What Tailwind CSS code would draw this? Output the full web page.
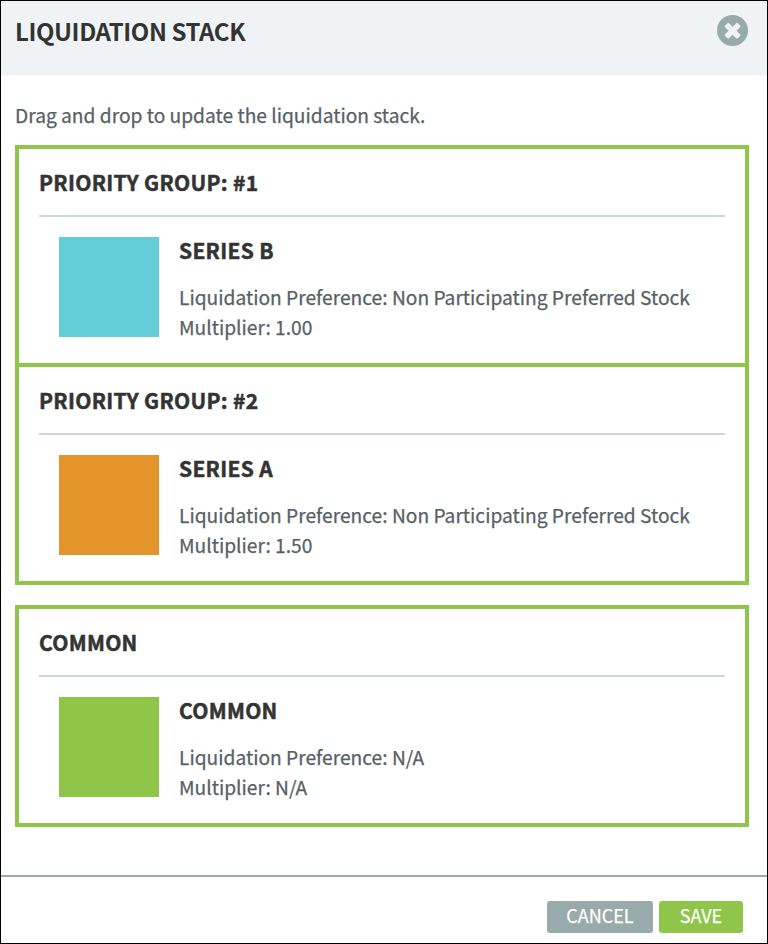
<!DOCTYPE html>
<html lang="en">

<head>
    <meta charset="UTF-8">
    <meta name="viewport" content="width=device-width, initial-scale=1.0">
    <title>Liquidation Stack</title>
    <script src="https://cdn.jsdelivr.net/npm/@tailwindcss/browser@4"></script>
</head>

<body class="bg-white font-['Noto_Sans_CJK_SC','Open_Sans',sans-serif] text-[19.2px] leading-[30px] text-[#566166] [-webkit-text-stroke:0.25px]">
    <div class="flex flex-col w-[768px] h-[944px] border border-black">
        <!-- Header -->
        <header class="flex justify-between h-[74px] shrink-0 bg-[#eff3f6] pl-[14px] pr-[19px] pt-[14px]">
            <h1 class="text-[24px] leading-[32px] font-bold tracking-[-0.4px] text-[#333333] [-webkit-text-stroke:0px]">LIQUIDATION STACK</h1>
            <button class="size-[31px]" aria-label="Close">
                <svg viewBox="0 0 31 31" class="size-[31px]">
                    <circle cx="15.5" cy="15.5" r="15.5" fill="#99aaaa" />
                    <g fill="#eff3f6" transform="rotate(45 15.6 15.7)">
                        <rect x="6.6" y="12.9" width="18" height="5.6" rx="1.2" />
                        <rect x="12.8" y="6.7" width="5.6" height="18" rx="1.2" />
                    </g>
                </svg>
            </button>
        </header>

        <!-- Stack -->
        <main class="pl-[14px] pr-[18px] pt-[25px]">
            <p class="mb-[15px]">Drag and drop to update the liquidation stack.</p>

            <section class="h-[222px] border-4 border-[#8fc64a] px-5">
                <h2 class="h-[68px] border-b-2 border-[#cdd9d9] pt-[18px] text-[21px] font-bold tracking-[0.3px] text-[#333333] [-webkit-text-stroke:0.5px]">PRIORITY GROUP: #1</h2>
                <div class="flex gap-[20px] pl-5 pt-5">
                    <div class="size-[100px] shrink-0 bg-[#64ccd6]"></div>
                    <div>
                        <h3 class="mb-[17px] -mt-[2px] text-[21px] font-bold tracking-[0.3px] text-[#333333] [-webkit-text-stroke:0.5px]">SERIES B</h3>
                        <p>Liquidation Preference: Non Participating Preferred Stock</p>
                        <p>Multiplier: 1.00</p>
                    </div>
                </div>
            </section>

            <section class="-mt-1 h-[222px] border-4 border-[#8fc64a] px-5">
                <h2 class="h-[68px] border-b-2 border-[#cdd9d9] pt-[18px] text-[21px] font-bold tracking-[0.3px] text-[#333333] [-webkit-text-stroke:0.5px]">PRIORITY GROUP: #2</h2>
                <div class="flex gap-[20px] pl-5 pt-5">
                    <div class="size-[100px] shrink-0 bg-[#e3942b]"></div>
                    <div>
                        <h3 class="mb-[17px] -mt-[2px] text-[21px] font-bold tracking-[0.3px] text-[#333333] [-webkit-text-stroke:0.5px]">SERIES A</h3>
                        <p>Liquidation Preference: Non Participating Preferred Stock</p>
                        <p>Multiplier: 1.50</p>
                    </div>
                </div>
            </section>

            <section class="mt-5 h-[222px] border-4 border-[#8fc64a] px-5">
                <h2 class="h-[68px] border-b-2 border-[#cdd9d9] pt-[18px] text-[21px] font-bold tracking-[0.3px] text-[#333333] [-webkit-text-stroke:0.5px]">COMMON</h2>
                <div class="flex gap-[20px] pl-5 pt-5">
                    <div class="size-[100px] shrink-0 bg-[#8fc64a]"></div>
                    <div>
                        <h3 class="mb-[17px] -mt-[2px] text-[21px] font-bold tracking-[0.3px] text-[#333333] [-webkit-text-stroke:0.5px]">COMMON</h3>
                        <p>Liquidation Preference: N/A</p>
                        <p>Multiplier: N/A</p>
                    </div>
                </div>
            </section>
        </main>

        <!-- Footer -->
        <footer class="mt-auto flex h-[68px] shrink-0 justify-end gap-[6px] border-t-2 border-[#99aaaa] pr-6 pt-6 text-[18px] leading-[28px] text-white">
            <button class="h-8 w-[106px] rounded-[3px] bg-[#99aaaa] pb-1">CANCEL</button>
            <button class="h-8 w-[84px] rounded-[3px] bg-[#8fc64a] pb-1">SAVE</button>
        </footer>
    </div>
</body>

</html>
